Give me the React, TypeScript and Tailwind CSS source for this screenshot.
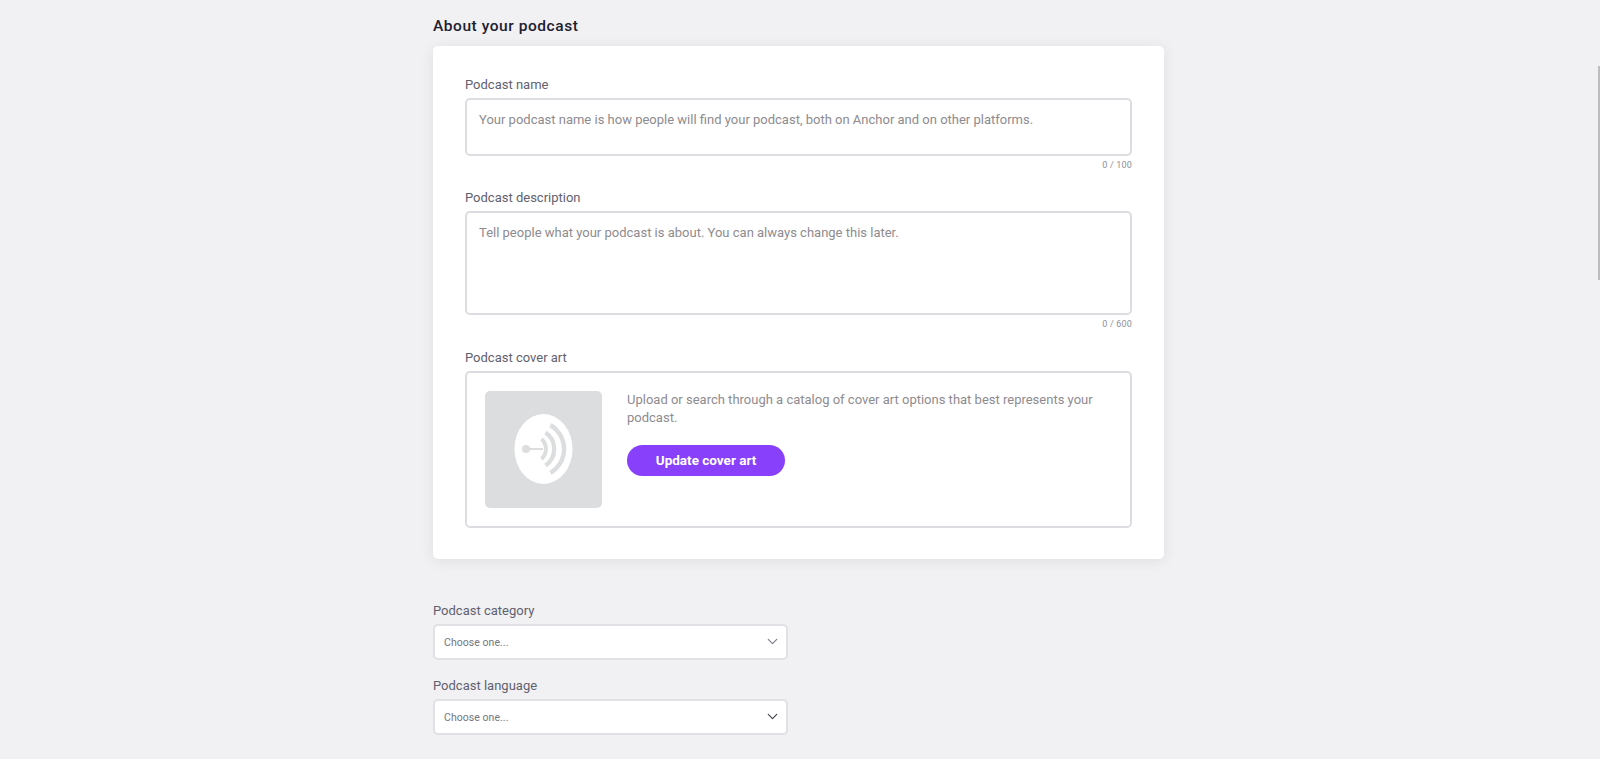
import { ChevronDown } from "lucide-react";

const font = "font-['Roboto',sans-serif]";

function CoverLogo() {
  return (
    <svg width="117" height="117" viewBox="0 0 117 117" fill="none">
      <ellipse cx="58.5" cy="58" rx="29" ry="35" fill="#fff" />
      <circle cx="41" cy="58" r="4" fill="#dcdddf" />
      <path d="M41 58H58" stroke="#dcdddf" strokeWidth="2" />
      <path d="M56.5 48A13.5 13.5 0 0 1 56.5 68" stroke="#dcdddf" strokeWidth="4" />
      <path d="M60.5 41.5A20 20 0 0 1 60.5 74.5" stroke="#dcdddf" strokeWidth="4.2" />
      <path d="M65.5 34A28 28 0 0 1 65.5 82" stroke="#dcdddf" strokeWidth="4.4" />
    </svg>
  );
}

function Field({
  label,
  placeholder,
  count,
  height,
}: {
  label: string;
  placeholder: string;
  count: string;
  height: string;
}) {
  return (
    <div>
      <label className="block h-[20px] text-[13px] leading-[22px] text-[#5f6170]">{label}</label>
      <textarea
        placeholder={placeholder}
        className={`mt-[4px] block w-full resize-none rounded-[5px] border-2 border-[#dcdde0] bg-white px-[12px] py-[10px] text-[13px] leading-[20px] outline-none placeholder:text-[#8e8b90] ${height}`}
      />
      <div className="mt-[1px] h-[17px] text-right text-[9px] leading-[16px] tracking-[0.2px] text-[#8e8f97]">{count}</div>
    </div>
  );
}

function SelectField({ label, dark }: { label: string; dark?: boolean }) {
  return (
    <div>
      <label className="block h-[20px] text-[13px] leading-[22px] text-[#5f6170]">{label}</label>
      <div className="relative mt-[4px]">
        <select className="block h-[36px] w-full appearance-none rounded-[5px] border-2 border-[#e0e1e4] bg-white px-[9px] pt-[1px] text-[10.5px] tracking-[0.05px] text-[#74757f] outline-none">
          <option>Choose one...</option>
        </select>
        <ChevronDown
          className={`pointer-events-none absolute top-[9px] right-[7px] h-[17px] w-[17px] ${dark ? "text-[#3a3c46]" : "text-[#777883]"}`}
          strokeWidth={1.5}
        />
      </div>
    </div>
  );
}

export default function App() {
  return (
    <div className={`relative h-[759px] overflow-hidden bg-[#f1f1f3] pt-[16px] pl-[433px] ${font}`}>
      <div className="w-[731px]">
        <h2 className="h-[20px] text-[15.5px] leading-[20px] font-medium tracking-[0.55px] text-[#1c2030]">About your podcast</h2>

        <div className="mt-[10px] h-[513px] rounded-[5px] bg-white px-[32px] pt-[28px] shadow-[0_2px_14px_rgba(40,40,60,0.09)]">
          <Field
            label="Podcast name"
            placeholder="Your podcast name is how people will find your podcast, both on Anchor and on other platforms."
            count="0 / 100"
            height="h-[58px]"
          />
          <div className="mt-[13px]">
            <Field
              label="Podcast description"
              placeholder="Tell people what your podcast is about. You can always change this later."
              count="0 / 600"
              height="h-[104px]"
            />
          </div>
          <div className="mt-[14px]">
            <label className="block h-[20px] text-[13px] leading-[22px] text-[#5f6170]">Podcast cover art</label>
            <div className="mt-[4px] flex h-[157px] gap-[25px] rounded-[5px] border-2 border-[#dcdde0] p-[18px]">
              <div className="h-[117px] w-[117px] shrink-0 rounded-[5px] bg-[#dcdddf]">
                <CoverLogo />
              </div>
              <div className="pr-[8px]">
                <p className="text-[13px] leading-[18px] text-[#8e8b90]">
                  Upload or search through a catalog of cover art options that best represents your podcast.
                </p>
                <button className="mt-[18px] h-[31px] w-[158px] rounded-full bg-[#8940fa] pb-[1px] text-[13.5px] font-bold text-white">
                  Update cover art
                </button>
              </div>
            </div>
          </div>
        </div>

        <div className="mt-[41px] w-[355px]">
          <SelectField label="Podcast category" />
          <div className="mt-[15px]">
            <SelectField label="Podcast language" dark />
          </div>
        </div>
      </div>

      <div className="absolute top-[66px] right-0 h-[214px] w-[2px] bg-[#bdbdbd]" />
    </div>
  );
}
